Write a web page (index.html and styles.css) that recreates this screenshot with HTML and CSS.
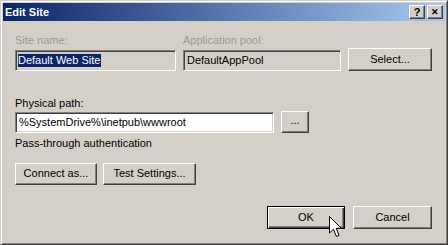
FILE: index.html
```html
<!DOCTYPE html>
<html><head>
<meta charset="utf-8">
<link rel="stylesheet" href="styles.css">
</head><body>
<div class="window">
	<div class="titlebar">
		<span class="title">Edit Site</span>
		<span class="capbtn">?</span>
		<span class="capbtn close">&#x2715;</span>
	</div>
	<div class="content">
		<div class="siterow">
			<div class="label off">Site name:</div>
			<div class="label off">Application pool:</div>
			<div></div>
			<div class="field ro site"><span class="sel">Default Web Site</span></div>
			<div class="field ro pool">DefaultAppPool</div>
			<div class="btn select">Select...</div>
		</div>
		<div class="label path_label">Physical path:</div>
		<div class="pathrow">
			<div class="field path">%SystemDrive%\inetpub\wwwroot</div>
			<div class="btn browse">...</div>
		</div>
		<div class="label pass">Pass-through authentication</div>
		<div class="btnrow">
			<div class="btn connect">Connect as...</div>
			<div class="btn test">Test Settings...</div>
		</div>
		<div class="footer">
			<div class="btn default ok">OK<svg class="cursor" width="13" height="22" viewBox="0 0 13 22"><polygon points="0.5,0.5 0.5,17 4.5,13.2 7.4,20.5 10,19.4 7.2,12.3 12.3,12.3" fill="#fff" stroke="#000" stroke-width="1"/></svg></div>
			<div class="btn cancel">Cancel</div>
		</div>
	</div>
</div>
</body></html>
```
FILE: styles.css
```css
html,body{margin:0;padding:0;background:#d4d0c8;}
body{font-family:"Liberation Sans",Arial,sans-serif;font-size:11px;color:#000;}
.window{width:448px;height:245px;box-sizing:border-box;border:1px solid;border-color:#d4d0c8 #404040 #404040 #d4d0c8;box-shadow:inset 1px 1px #fff,inset -1px -1px #808080;padding:2px;background:#d4d0c8;display:flex;flex-direction:column;}
.titlebar{height:18px;display:flex;align-items:center;background:linear-gradient(to right,#0a246a,#a6caf0);padding:0 2px 0 2px;}
.title{flex:1;color:#fff;font-weight:bold;font-size:11px;line-height:18px;}
.capbtn{width:16px;height:14px;box-sizing:border-box;background:#d4d0c8;border:1px solid;border-color:#fff #404040 #404040 #fff;box-shadow:inset -1px -1px #808080;font-weight:bold;font-size:11px;line-height:12px;text-align:center;margin-left:2px;}
.capbtn.close{font-size:9px;line-height:12px;}
.content{flex:1;padding:13px 0 0 12px;}
.label{height:13px;line-height:13px;}
.off{color:#9c9a94;}
.siterow{display:grid;grid-template-columns:161px 158px 84px;column-gap:7px;align-items:end;}
.siterow .label{margin-bottom:1px;}
.field{box-sizing:border-box;height:21px;border:1px solid;border-color:#808080 #fff #fff #808080;box-shadow:inset 1px 1px #404040,inset -1px -1px #d4d0c8;padding:3px 0 0 3px;line-height:13px;white-space:nowrap;}
.ro{background:#d4d0c8;}
.sel{background:#0a246a;color:#fff;padding:0 1px 0 0;margin-left:-1px;display:inline-block;}
.btn{box-sizing:border-box;height:23px;border:1px solid;border-color:#fff #404040 #404040 #fff;box-shadow:inset -1px -1px #808080;text-align:center;line-height:20px;background:#d4d0c8;}
.path_label{margin-top:26px;}
.pathrow{display:flex;align-items:end;gap:7px;margin-top:1px;}
.field.path{width:259px;background:#fff;}
.browse{width:28px;height:22px;line-height:16px;}
.pass{margin-top:4px;}
.btnrow{display:flex;gap:6px;margin-top:13px;}
.connect{width:82px;height:22px;line-height:19px;}
.test{width:93px;height:22px;line-height:19px;}
.footer{display:flex;justify-content:flex-end;gap:8px;margin:21px 13px 0 0;}
.ok{width:78px;position:relative;}
.cancel{width:79px;}
.btn.default{border:1px solid #000;box-shadow:inset 1px 1px #fff,inset -1px -1px #404040,inset -2px -2px #808080;}
.cursor{position:absolute;left:61px;top:9px;}
```
